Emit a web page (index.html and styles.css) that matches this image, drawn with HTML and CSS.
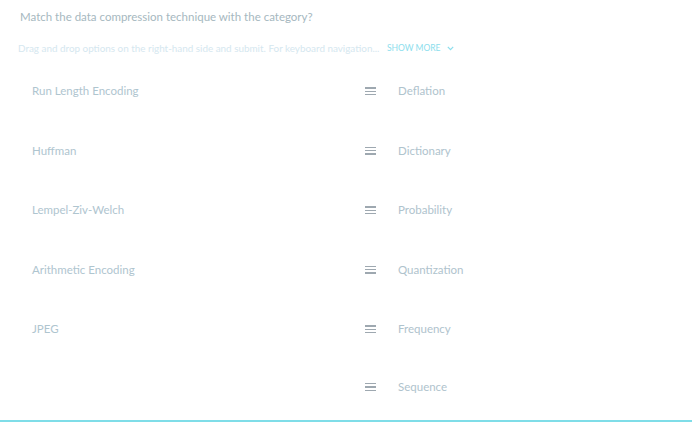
FILE: index.html
```html
<!DOCTYPE html>
<html>
<head>
<meta charset="utf-8">
<link rel="stylesheet" href="styles.css">
</head>
<body>
<div class="page">
  <div class="question">Match the data compression technique with the category?</div>
  <div class="hint">Drag and drop options on the right-hand side and submit. For keyboard navigation... <span class="more">SHOW MORE <svg class="chev" width="7" height="5" viewBox="0 0 7 5"><path d="M0.8 0.8 L3.5 3.6 L6.2 0.8" fill="none" stroke="currentColor" stroke-width="1.2"/></svg></span></div>
  <div class="match">
    <div class="row"><div class="left">Run Length Encoding</div><div class="right"><span class="grip"><i></i><i></i><i></i></span><span>Deflation</span></div></div>
    <div class="row"><div class="left">Huffman</div><div class="right"><span class="grip"><i></i><i></i><i></i></span><span>Dictionary</span></div></div>
    <div class="row"><div class="left">Lempel-Ziv-Welch</div><div class="right"><span class="grip"><i></i><i></i><i></i></span><span>Probability</span></div></div>
    <div class="row"><div class="left">Arithmetic Encoding</div><div class="right"><span class="grip"><i></i><i></i><i></i></span><span>Quantization</span></div></div>
    <div class="row"><div class="left">JPEG</div><div class="right"><span class="grip"><i></i><i></i><i></i></span><span>Frequency</span></div></div>
    <div class="row last"><div class="left"></div><div class="right"><span class="grip"><i></i><i></i><i></i></span><span>Sequence</span></div></div>
  </div>
  <div class="bottomline"></div>
</div>
</body>
</html>
```
FILE: styles.css
```css
html, body {
  margin: 0;
  padding: 0;
  background: #ffffff;
}
body {
  font-family: Lato, "Open Sans", sans-serif;
  width: 700px;
  height: 423px;
  overflow: hidden;
}
.page {
  display: flex;
  flex-direction: column;
  height: 423px;
}
.question {
  font-size: 11.5px;
  color: #a6b8c0;
  padding: 10px 0 0 20px;
  line-height: 14px;
}
.hint {
  font-size: 9.9px;
  color: #d5e7ef;
  padding: 19px 0 0 18px;
  line-height: 10px;
  display: flex;
  align-items: center;
  white-space: pre;
}
.more {
  color: #8cdeed;
  font-size: 8.5px;
  display: inline-flex;
  align-items: center;
  gap: 4px;
  margin-left: 5px;
}
.chev {
  display: block;
}
.match {
  display: flex;
  flex-direction: column;
  padding-top: 8.5px;
}
.row {
  display: flex;
  align-items: center;
  height: 59.5px;
  font-size: 11.5px;
  line-height: 14px;
}
.row.last {
  height: 56px;
}
.left {
  width: 365px;
  padding-left: 32px;
  box-sizing: border-box;
  color: #afc5cf;
}
.right {
  display: flex;
  align-items: center;
  color: #afc3cd;
}
.grip {
  display: flex;
  flex-direction: column;
  gap: 2px;
  width: 11px;
  margin-right: 22px;
}
.grip i {
  display: block;
  height: 1.3px;
  background: #9ea8b0;
}
.bottomline {
  margin-top: auto;
  height: 2px;
  background: #7fdde8;
  margin-right: 8px;
  margin-bottom: 1px;
}
```
